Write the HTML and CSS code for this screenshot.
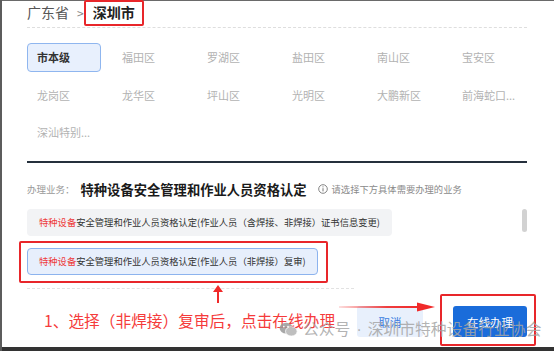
FILE: index.html
```html
<!DOCTYPE html>
<html lang="zh-CN">
<head>
<meta charset="utf-8">
<title>深圳市 - 办理业务</title>
<link rel="stylesheet" href="styles.css">
</head>
<body>
<div class="screen">
  <div class="page">
    <nav class="crumbs">
      <span class="crumb">广东省</span>
      <span class="sep">&gt;</span>
      <span class="crumb current">深圳市</span>
    </nav>
    <div class="districts">
      <span class="district active">市本级</span>
      <span class="district">福田区</span>
      <span class="district">罗湖区</span>
      <span class="district">盐田区</span>
      <span class="district">南山区</span>
      <span class="district">宝安区</span>
      <span class="district">龙岗区</span>
      <span class="district">龙华区</span>
      <span class="district">坪山区</span>
      <span class="district">光明区</span>
      <span class="district">大鹏新区</span>
      <span class="district">前海蛇口...</span>
      <span class="district">深汕特别...</span>
    </div>
    <div class="divider"></div>
    <div class="biz-head">
      <span class="biz-label">办理业务：</span>
      <span class="biz-title">特种设备安全管理和作业人员资格认定</span>
      <span class="hint">
        <svg class="info" viewBox="0 0 10 10" width="10" height="10"><circle cx="5" cy="5" r="4.3" fill="none" stroke="#777" stroke-width="0.9"/><line x1="5" y1="4.2" x2="5" y2="7.4" stroke="#777" stroke-width="1"/><circle cx="5" cy="2.8" r="0.6" fill="#777"/></svg>请选择下方具体需要办理的业务
      </span>
    </div>
    <div class="options-wrap">
      <div class="options">
        <div class="option"><em>特种设备</em>安全管理和作业人员资格认定(作业人员（含焊接、非焊接）证书信息变更)</div>
        <div class="option selected"><em>特种设备</em>安全管理和作业人员资格认定(作业人员（非焊接）复审)</div>
      </div>
      <div class="scrollbar"></div>
    </div>
    <div class="footer-line"></div>
    <div class="actions">
      <button class="btn cancel">取消</button>
      <button class="btn primary">在线办理</button>
    </div>
  </div>

  <div class="mark mark-city"></div>
  <div class="mark mark-option"></div>
  <div class="mark mark-button"></div>
  <svg class="arrow-up" viewBox="0 0 12 18" width="12" height="18"><polygon points="6,0 11,7 7,7 7,18 5,18 5,7 1,7" fill="#f02a2a"/></svg>
  <svg class="arrow-right" viewBox="0 0 96 10" width="96" height="10">
    <defs><linearGradient id="fade" x1="0" x2="1" y1="0" y2="0"><stop offset="0" stop-color="#f02a2a" stop-opacity="0.15"/><stop offset="0.6" stop-color="#f02a2a" stop-opacity="0.9"/><stop offset="1" stop-color="#f02a2a"/></linearGradient></defs>
    <rect x="0" y="4" width="80" height="2" fill="url(#fade)"/>
    <polygon points="78,0.5 96,5 78,9.5" fill="#f02a2a"/>
  </svg>
  <div class="note">1、选择（非焊接）复审后，点击在线办理</div>
  <div class="watermark">
    <svg class="wx" viewBox="0 0 20 16" width="19" height="15"><ellipse cx="7.5" cy="6.5" rx="7" ry="5.8" fill="#9a9a9a"/><ellipse cx="13" cy="10" rx="6.2" ry="5" fill="#b5b5b5" stroke="#fff" stroke-width="0.8"/><circle cx="5" cy="5" r="0.9" fill="#fff"/><circle cx="9.5" cy="5" r="0.9" fill="#fff"/></svg>
    <span>公众号<span class="dot">·</span>深圳市特种设备行业协会</span>
  </div>
</div>
</body>
</html>
```

FILE: styles.css
```css
html, body {
  margin: 0;
  padding: 0;
}
body {
  width: 554px;
  height: 351px;
  overflow: hidden;
  background: #fff;
  font-family: "Noto Sans CJK SC", "Noto Sans", sans-serif;
}
.screen {
  position: relative;
  width: 554px;
  height: 351px;
  overflow: hidden;
  background: #fff;
  box-shadow: inset 2px 0 0 #5c5c5c, inset 0 1px 0 #6a6a6a, inset 0 -4px 0 #333;
}
.page {
  padding: 1px 27px 0 27px;
  display: flex;
  flex-direction: column;
}
.crumbs {
  height: 22px;
  padding-bottom: 4px;
  display: flex;
  align-items: center;
  border-bottom: 1px dashed #dedede;
  font-size: 14px;
}
.crumb {
  color: #555;
}
.sep {
  color: #888;
  font-size: 12px;
  margin: 0 9px 0 8px;
}
.crumb.current {
  color: #222;
  font-weight: 700;
}
.districts {
  margin-top: 15px;
  display: grid;
  grid-template-columns: repeat(6, 74px);
  column-gap: 11px;
  row-gap: 8.5px;
}
.district {
  box-sizing: border-box;
  height: 29px;
  line-height: 27px;
  padding: 0 9px;
  border: 1px solid transparent;
  border-radius: 4px;
  font-size: 11px;
  color: #b2b2b2;
  white-space: nowrap;
  overflow: hidden;
}
.district.active {
  background: #e8f0fd;
  border-color: #8fb6ef;
  color: #333;
  font-weight: 700;
}
.divider {
  margin-top: 14px;
  height: 2px;
  background: #25303c;
}
.biz-head {
  margin-top: 16px;
  height: 20px;
  display: flex;
  align-items: center;
}
.biz-label {
  font-size: 9.5px;
  color: #999;
  margin-right: 6px;
}
.biz-title {
  font-size: 13.3px;
  font-weight: 700;
  color: #1a1a1a;
}
.hint {
  margin-left: 11px;
  display: flex;
  align-items: center;
  font-size: 9.3px;
  color: #8a8a8a;
}
.info {
  margin-right: 4px;
}
.options-wrap {
  margin-top: 10px;
  display: flex;
  align-items: flex-start;
}
.options {
  flex: 1;
  display: flex;
  flex-direction: column;
  align-items: flex-start;
  gap: 12px;
}
.option {
  box-sizing: border-box;
  height: 27px;
  line-height: 25px;
  padding: 0 11px;
  border: 1px solid transparent;
  border-radius: 4px;
  background: #f2f3f5;
  font-size: 9.3px;
  color: #333;
  white-space: nowrap;
}
.option em {
  font-style: normal;
  color: #ee3b3b;
}
.option.selected {
  background: #e7effc;
  border-color: #8cb3ee;
}
.scrollbar {
  width: 5px;
  height: 23px;
  border-radius: 3px;
  background: #d2d2d2;
}
.footer-line {
  margin-top: 13px;
  width: 327px;
  border-top: 1px dashed #e2e2e2;
}
.actions {
  margin-top: 17px;
  display: flex;
  justify-content: flex-end;
  gap: 30px;
}
.btn {
  height: 31px;
  border: none;
  border-radius: 3px;
  font-family: inherit;
  font-size: 11.5px;
  padding: 0;
}
.btn.cancel {
  width: 66px;
  background: #e8f0fc;
  color: #3b7de0;
}
.btn.primary {
  width: 74px;
  background: #1a6cda;
  color: #fff;
}

/* annotations */
.mark {
  position: absolute;
  box-sizing: border-box;
  border: 2px solid #e8262a;
  border-radius: 2px;
}
.mark-city {
  left: 84px;
  top: 0;
  width: 60px;
  height: 26px;
}
.mark-option {
  left: 19px;
  top: 241px;
  width: 309px;
  height: 42px;
}
.mark-button {
  left: 440px;
  top: 294px;
  width: 96px;
  height: 52px;
}
.arrow-up {
  position: absolute;
  left: 212px;
  top: 285px;
}
.arrow-right {
  position: absolute;
  left: 339px;
  top: 302px;
}
.note {
  position: absolute;
  left: 44px;
  top: 310px;
  font-size: 15.7px;
  line-height: 22px;
  color: #f53b3b;
  white-space: nowrap;
}
.watermark {
  position: absolute;
  left: 279px;
  top: 318px;
  display: flex;
  align-items: center;
  gap: 5px;
  font-size: 15.8px;
  line-height: 22px;
  color: rgba(165, 165, 165, 0.85);
  white-space: nowrap;
}
.dot {
  font-family: "Liberation Sans", sans-serif;
  margin: 0 6px;
}
.wx {
  opacity: 0.85;
}
```
